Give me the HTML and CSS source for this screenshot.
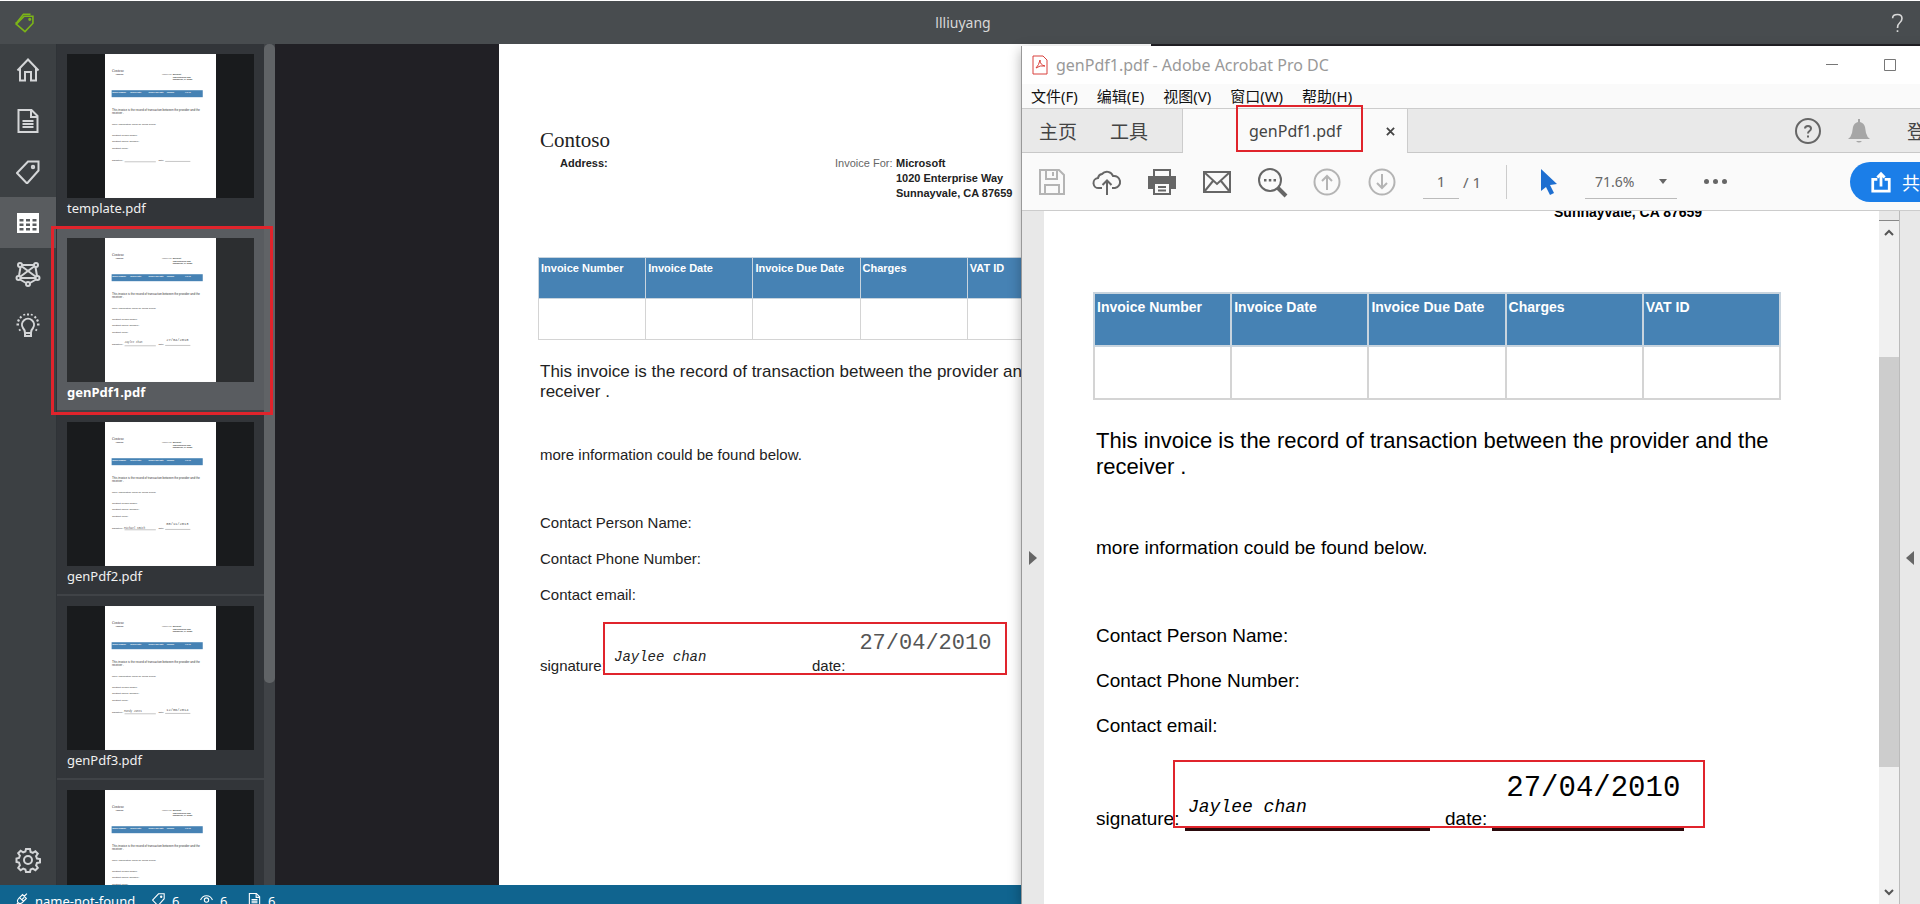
FILE: index.html
```html
<!DOCTYPE html>
<html lang="en">
<head>
    <meta charset="UTF-8">
    <meta name="viewport" content="width=device-width, initial-scale=1.0">
    <title>llliuyang</title>
    <link rel="stylesheet" href="styles.css">
</head>
<body>
    <!-- shared drawings -->
    <svg class="defs" aria-hidden="true">
        <symbol id="i-tag" viewBox="0 0 24 24"><path d="M1 13 12 1.500h10.500v9L11 23.500z"/><circle cx="17" cy="7" r="1.200"/></symbol>
        <symbol id="i-doc" viewBox="0 0 24 24"><path d="M2.500 1h13l6 6v16h-19z"/><path d="M15 1v7h6.500M6.500 12h11M6.500 15h11M6.500 18h11"/></symbol>
        <symbol id="thumb" viewBox="0 0 653 847">
            <rect width="653" height="847" fill="#fff"/>
            <g font-family="Liberation Sans, Arial, sans-serif" font-size="15" fill="#333">
                <text x="41" y="103" font-family="Liberation Serif, serif" font-size="21">Contoso</text>
                <g font-size="11" font-weight="bold">
                    <text x="62" y="124">Address:</text>
                    <text x="336" y="124" font-weight="normal">Invoice For:</text>
                    <text x="398" y="124">Microsoft</text>
                    <text x="398" y="139">1020 Enterprise Way</text>
                    <text x="398" y="154">Sunnayvale, CA 87659</text>
                </g>
                <rect x="39" y="213" width="536" height="41" fill="#4682b4"/>
                <g font-size="11" font-weight="bold" fill="#fff">
                    <text x="42" y="227">Invoice Number</text>
                    <text x="149" y="227">Invoice Date</text>
                    <text x="256" y="227">Invoice Due Date</text>
                    <text x="363" y="227">Charges</text>
                    <text x="471" y="227">VAT ID</text>
                </g>
                <text x="41" y="333" font-size="17">This invoice is the record of transaction between the provider and the</text>
                <text x="41" y="353" font-size="17">receiver .</text>
                <text x="41" y="416">more information could be found below.</text>
                <text x="41" y="484">Contact Person Name:</text>
                <text x="41" y="520">Contact Phone Number:</text>
                <text x="41" y="556">Contact email:</text>
                <text x="41" y="627">signature:</text>
                <text x="314" y="627">date:</text>
                <path d="M115 634h184M354 632h148" stroke="#555" stroke-width="2"/>
            </g>
        </symbol>
    </svg>

    <div class="app">
        <header class="titlebar">
            <svg class="logo" viewBox="0 0 24 24"><path d="M1 14 11 4h11v9L12 23.500z"/><path d="M1 13 10 1.500h9"/><path d="M1 11.500v2.500"/><circle cx="18" cy="8" r="1"/></svg>
            <h1>llliuyang</h1>
            <button class="help" aria-label="Help">
                <svg viewBox="0 0 16 24"><path d="M2 6q0-4.500 6-4.500 5.500 0 5.500 5 0 3-3 5.500-2.500 2-2.500 6M8 21v2"/></svg>
            </button>
        </header>

        <div class="workspace">
            <nav class="sidebar">
                <button aria-label="Home"><svg viewBox="0 0 24 24"><path d="M1.500 12.500 12 1.500l10.500 11M4 10.500V22.500h5v-8.500h6v8.500h5V10.500"/></svg></button>
                <button aria-label="Documents"><svg><use href="#i-doc"/></svg></button>
                <button aria-label="Tags"><svg><use href="#i-tag"/></svg></button>
                <button class="active" aria-label="Tables"><svg viewBox="0 0 24 24"><path class="solid" d="M1 2h22v20H1zM3.500 8h4v2.500h-4zM10 8h4v2.500h-4zM16.500 8h4v2.500h-4zM3.500 12.500h4V15h-4zM10 12.500h4V15h-4zM16.500 12.500h4V15h-4zM3.500 17h4v2.500h-4zM10 17h4v2.500h-4zM16.500 17h4v2.500h-4z"/></svg></button>
                <button aria-label="Train"><svg viewBox="0 0 24 24"><path d="M6 3h12M4.500 5 3 14M19.500 5 21 14M6 4.500l13.500 10M18 4.500 4.500 14.500M4 17.500l6 3.500M20 17.500l-6 3.500M4.500 16h15"/><circle cx="4" cy="3" r="2"/><circle cx="20" cy="3" r="2"/><circle cx="2.500" cy="16" r="2"/><circle cx="21.500" cy="16" r="2"/><circle cx="12" cy="22" r="2"/></svg></button>
                <button aria-label="Predict"><svg viewBox="0 0 24 24"><path d="M9 20q0-3-2-5a6 6 0 1 1 10 0q-2 2-2 5v3H9zM9 20h6M12 .5v2M4 3.500l1.500 1.500M20 3.500 18.500 5M.5 11.500h2.500M21 11.500h2.500M8 1l.5 1.500M16 1l-.5 1.500M1.500 7l2 1M22.500 7l-2 1M3 17.500l1.500-1M21 17.500l-1.500-1"/></svg></button>
                <button class="settings" aria-label="Settings"><svg viewBox="0 0 24 24"><path d="M10 1h4l.6 3 2.200.9 2.600-1.700 2.400 2.500-1.700 2.500.9 2.300 3 .5v3.500l-3 .5-.9 2.300 1.700 2.500-2.400 2.500-2.600-1.700-2.200.9-.6 2.500h-4l-.6-2.500-2.200-.9-2.600 1.700-2.400-2.500 1.700-2.500L3 14.500l-2.500-.5v-3.500l2.500-.5.900-2.300-1.700-2.500 2.400-2.500 2.600 1.700 2.200-.9z"/><circle cx="12" cy="12" r="4"/></svg></button>
            </nav>

            <div class="previews">
                <ul class="preview-list">
                    <li class="preview">
                        <div class="thumb"><svg><use href="#thumb"/></svg></div>
                        <span>template.pdf</span>
                    </li>
                    <li class="preview selected">
                        <div class="thumb"><svg viewBox="0 0 653 847"><use href="#thumb"/><text class="mini-sign" x="115" y="618">Jaylee chan</text><text class="mini-date" x="360" y="606">27/04/2010</text></svg></div>
                        <span>genPdf1.pdf</span>
                    </li>
                    <li class="preview">
                        <div class="thumb"><svg viewBox="0 0 653 847"><use href="#thumb"/><text class="mini-sign" x="112" y="632">Michael Smith</text><text class="mini-date" x="360" y="606">08/11/2013</text></svg></div>
                        <span>genPdf2.pdf</span>
                    </li>
                    <li class="preview">
                        <div class="thumb"><svg viewBox="0 0 653 847"><use href="#thumb"/><text class="mini-sign" x="112" y="626">Mandy Jones</text><text class="mini-date" x="360" y="616">12/06/2014</text></svg></div>
                        <span>genPdf3.pdf</span>
                    </li>
                    <li class="preview">
                        <div class="thumb"><svg><use href="#thumb"/></svg></div>
                    </li>
                </ul>
                <div class="list-scroll"><i></i></div>
                <div class="mark mark-preview"></div>
            </div>

            <main class="editor">
                <article class="page page-small">
                    <div class="company">Contoso</div>
                    <div class="address">
                        <b class="from">Address:</b>
                        <span>Invoice For:</span>
                        <b>Microsoft<br>1020 Enterprise Way<br>Sunnayvale, CA 87659</b>
                    </div>
                    <table>
                        <tr><th>Invoice Number</th><th>Invoice Date</th><th>Invoice Due Date</th><th>Charges</th><th>VAT ID</th></tr>
                        <tr><td></td><td></td><td></td><td></td><td></td></tr>
                    </table>
                    <p class="lead">This invoice is the record of transaction between the provider and the<br>receiver .</p>
                    <p class="more">more information could be found below.</p>
                    <p class="contact">Contact Person Name:</p>
                    <p class="contact">Contact Phone Number:</p>
                    <p class="contact">Contact email:</p>
                    <div class="sign">
                        <span class="sign-label">signature:</span>
                        <span class="blank blank-name">Jaylee chan</span>
                        <span>date:</span>
                        <span class="blank blank-date">27/04/2010</span>
                        <div class="mark mark-sign"></div>
                    </div>
                </article>
            </main>
        </div>

        <footer class="statusbar">
            <svg viewBox="0 0 24 24"><path d="M1 23l5-5M6 11l8-8 7 7-8 8q-4 3-7 0t0-7M17 6l5-5M9 9l7 7M13 12l4-4"/></svg>
            <span class="conn">name-not-found</span>
            <svg><use href="#i-tag"/></svg><span>6</span>
            <svg viewBox="0 0 24 24"><path d="M1 13Q4 5 12 5t11 8"/><circle cx="12" cy="13" r="4"/></svg><span>6</span>
            <svg><use href="#i-doc"/></svg><span>6</span>
        </footer>
    </div>

    <!-- reader window on top of the app -->
    <section class="window" lang="zh-CN">
        <div class="win-title">
            <svg class="pdf" viewBox="0 0 16 20"><path d="M1 1h10l4 4v14H1z"/><path d="M4 13q3-3 4-8 0 5 5 6-5-1-9 2z"/></svg>
            <span>genPdf1.pdf - Adobe Acrobat Pro DC</span>
            <div class="win-buttons">
                <button aria-label="Minimize"><svg viewBox="0 0 12 12"><path d="M0 5.500h12"/></svg></button>
                <button aria-label="Maximize"><svg viewBox="0 0 12 12"><path d="M.5.500h11v11H.5z"/></svg></button>
            </div>
        </div>
        <div class="win-menu">
            <span>文件(F)</span><span>编辑(E)</span><span>视图(V)</span><span>窗口(W)</span><span>帮助(H)</span>
        </div>
        <div class="win-tabs">
            <div class="tabs-left"><span>主页</span><span>工具</span></div>
            <div class="tab-open">
                <span>genPdf1.pdf</span>
                <button aria-label="Close tab"><svg viewBox="0 0 10 10"><path d="M1 1l8 8M9 1 1 9"/></svg></button>
                <div class="mark mark-tab"></div>
            </div>
            <div class="tabs-right">
                <button aria-label="Help"><svg viewBox="0 0 28 28"><circle cx="14" cy="14" r="12"/><path d="M11 11.500q0-2.500 3-2.500t3 2.500q0 1.500-1.500 2.500t-1.500 2.500M14 18.500v2"/></svg></button>
                <button class="bell" aria-label="Notifications"><svg viewBox="0 0 22 26"><path d="M0 21q3-2 4-6l1-6q1-4 5-5V1h2v3q4 1 5 5l1 6q1 4 4 6zM8 23h6q-3 3-6 0z"/></svg></button>
                <span>登录</span>
            </div>
        </div>
        <div class="win-tools">
            <button class="dim" aria-label="Save"><svg viewBox="0 0 28 28"><path d="M2 2h19l5 5v19H2zM8 2v9h11V2M7 26V17h14v9M15 4v4"/></svg></button>
            <button aria-label="Upload"><svg viewBox="0 0 28 28"><path d="M9 20H6a5 5 0 0 1-1-10 5 5 0 0 1 4-4 6.500 6.500 0 0 1 11 2 6 6 0 0 1 2 12h-3M14 27V13M9.500 17 14 12.500l4.500 4.500"/></svg></button>
            <button aria-label="Print"><svg viewBox="0 0 28 28"><path d="M6 8V2h16v6"/><path class="fill" d="M0 8h28v13h-5v-6H5v6H0z"/><path d="M6 15h16v11H6zM10 19h8M10 22.500h8"/></svg></button>
            <button aria-label="Mail"><svg viewBox="0 0 28 28"><path d="M1 4h26v20H1zM1 4l13 12L27 4M1 24l9-11M27 24l-9-11"/></svg></button>
            <button aria-label="Find"><svg viewBox="0 0 28 28"><circle cx="12" cy="12" r="11"/><path class="thick" d="M19.500 19.500 28 28"/><path class="fill" d="M6 11h2.500v2.500H6zM10.800 11h2.500v2.500h-2.500zM15.500 11H18v2.500h-2.500z"/></svg></button>
            <button class="dim" aria-label="Previous page"><svg viewBox="0 0 28 28"><circle cx="14" cy="14" r="12.500"/><path d="M14 22V8M9 13l5-5 5 5"/></svg></button>
            <button class="dim" aria-label="Next page"><svg viewBox="0 0 28 28"><circle cx="14" cy="14" r="12.500"/><path d="M14 6v14M9 15l5 5 5-5"/></svg></button>
            <label class="page-no"><input type="text" value="1" aria-label="Page"> / 1</label>
            <button class="pointer" aria-label="Select"><svg viewBox="0 0 18 28"><path d="M1 1v22l5-4 4 8 4-2-4-8 7-1z"/></svg></button>
            <button class="zoom">71.6%<svg viewBox="0 0 8 5"><path class="fill" d="M0 0h8L4 5z"/></svg></button>
            <button class="dots" aria-label="More tools"><i></i><i></i><i></i></button>
            <button class="share"><svg viewBox="0 0 24 24"><path d="M8 9H3v13h18V9h-5M12 17V3M8 7l4-4 4 4"/></svg>共享</button>
        </div>
        <div class="win-body">
            <button class="pane" aria-label="Open left pane"><svg viewBox="0 0 8 14"><path d="M0 0l8 7-8 7z"/></svg></button>
            <div class="canvas">
                <article class="page page-large">
                    <div class="address"><b>Sunnayvale, CA 87659</b></div>
                    <table>
                        <tr><th>Invoice Number</th><th>Invoice Date</th><th>Invoice Due Date</th><th>Charges</th><th>VAT ID</th></tr>
                        <tr><td></td><td></td><td></td><td></td><td></td></tr>
                    </table>
                    <p class="lead">This invoice is the record of transaction between the provider and the<br>receiver .</p>
                    <p class="more">more information could be found below.</p>
                    <p class="contact">Contact Person Name:</p>
                    <p class="contact">Contact Phone Number:</p>
                    <p class="contact">Contact email:</p>
                    <div class="sign">
                        <span class="sign-label">signature:</span>
                        <div class="mark mark-sign"></div>
                        <span class="blank blank-name">Jaylee chan</span>
                        <span>date:</span>
                        <span class="blank blank-date">27/04/2010</span>
                    </div>
                </article>
            </div>
            <div class="win-scroll">
                <div class="split"></div>
                <svg viewBox="0 0 10 7"><path d="M1 6l4-4 4 4"/></svg>
                <div class="track"><i></i></div>
                <svg viewBox="0 0 10 7"><path d="M1 1l4 4 4-4"/></svg>
            </div>
            <button class="pane pane-right" aria-label="Open right pane"><svg viewBox="0 0 8 14"><path d="M8 0 0 7l8 7z"/></svg></button>
        </div>
    </section>
</body>
</html>
```

FILE: styles.css
```css
* {
    box-sizing: border-box;
}
body {
    margin: 0;
    height: 100vh;
    overflow: hidden;
    position: relative;
    font-family: "Noto Sans", "Noto Sans CJK SC", sans-serif;
    font-size: 14px;
    background-color: #212025;
}
button {
    display: flex;
    align-items: center;
    justify-content: center;
    padding: 0;
    border: none;
    background: none;
    color: inherit;
    font: inherit;
    cursor: pointer;
}
svg {
    display: block;
    flex: none;
    fill: none;
    stroke: currentColor;
    overflow: visible;
}
.defs {
    position: absolute;
    width: 0;
    height: 0;
}
.mark {
    position: absolute;
    border: 2px solid #e0242c;
    pointer-events: none;
}

/* main app */
.app {
    display: flex;
    flex-direction: column;
    height: 100%;
}
.titlebar {
    display: flex;
    align-items: center;
    flex: none;
    height: 44px;
    padding: 0 16px 0 15px;
    border-top: 1px solid #fff;
    background-color: #484c4f;
    color: #d8d8d8;
}
.logo {
    width: 20px;
    height: 19px;
    color: #7cb518;
    stroke-width: 2;
}
.titlebar h1 {
    flex: 1;
    margin: 0;
    text-align: center;
    font-size: 14px;
    font-weight: normal;
}
.help svg {
    width: 13px;
    height: 20px;
    stroke-width: 2;
}
.workspace {
    display: flex;
    flex: 1;
    min-height: 0;
}
.sidebar {
    display: flex;
    flex-direction: column;
    flex: none;
    width: 56px;
    background-color: #3c4043;
    color: #d4d6d8;
}
.sidebar button {
    height: 51px;
    width: 56px;
}
.sidebar svg {
    width: 24px;
    height: 24px;
    stroke-width: 2;
}
.sidebar .active {
    background-color: #595c5f;
    color: #fff;
}
.solid {
    fill: currentColor;
    fill-rule: evenodd;
    stroke: none;
}
.sidebar .settings {
    margin-top: auto;
}
.previews {
    position: relative;
    display: flex;
    flex: none;
    width: 219px;
    border-left: 1px solid #2f3337;
    background-color: #323539;
}
.preview-list {
    flex: 1;
    margin: 0;
    padding: 0;
    overflow: hidden;
    list-style: none;
}
.preview {
    height: 184px;
    padding: 10px;
    border-bottom: 2px solid #404347;
    color: #f0f0f0;
    font-size: 13px;
}
.preview.selected {
    background-color: #595c60;
    color: #fff;
}
.selected span {
    font-weight: bold;
}
.thumb {
    height: 144px;
    background-color: #191b1d;
}
.selected .thumb {
    background-color: #2c2e30;
}
.thumb svg {
    width: 111px;
    height: 144px;
    margin: 0 auto;
    stroke: none;
}
.mini-sign {
    fill: #555;
    font: italic 16px "Liberation Mono", monospace;
}
.mini-date {
    fill: #555;
    font: 22px "Liberation Mono", monospace;
}
.preview span {
    display: block;
    line-height: 20px;
}
.list-scroll {
    flex: none;
    width: 11px;
    background-color: #404347;
}
.list-scroll i {
    display: block;
    height: 76%;
    border-radius: 5px;
    background-color: #606366;
}
.mark-preview {
    top: 182px;
    left: -6px;
    right: 2px;
    height: 189px;
    border-width: 3px;
}
.editor {
    flex: 1;
    min-width: 0;
    padding-left: 224px;
    overflow: hidden;
    background-color: #212025;
}
.statusbar {
    display: flex;
    flex: none;
    height: 19px;
    padding-left: 15px;
    background-color: #10648f;
    color: #fff;
    font-size: 13px;
    line-height: 32px;
}
.statusbar svg {
    width: 13px;
    height: 13px;
    margin-top: 8px;
    stroke-width: 2;
}
.statusbar span {
    width: 35px;
    padding-left: 7px;
}
.statusbar .conn {
    width: 124px;
}

/* invoice */
.page {
    background-color: #fff;
    color: #222;
    font-family: "Liberation Sans", Arial, sans-serif;
}
.page p {
    margin: 0;
    white-space: nowrap;
}
.company {
    font-family: "Liberation Serif", serif;
}
.page table {
    table-layout: fixed;
    border-collapse: collapse;
}
.page th {
    border: 1px solid #c8d4de;
    background-color: #4682b4;
    color: #fff;
    text-align: left;
    vertical-align: top;
    white-space: nowrap;
}
.page td {
    border: 1px solid #d4d4d4;
}
.sign {
    position: relative;
    display: flex;
}
.blank {
    position: relative;
    font-family: "Liberation Mono", monospace;
}
.blank-name {
    font-style: italic;
}

.page-small {
    width: 652px;
    height: 100%;
    padding: 84px 0 0 41px;
    font-size: 15px;
    line-height: 20px;
}
.page-small .company {
    font-size: 21px;
    line-height: 24px;
}
.page-small .address {
    display: flex;
    margin: 4px 0 56px 20px;
    font-size: 11px;
    line-height: 15px;
}
.page-small .from {
    width: 275px;
}
.page-small .address span {
    width: 61px;
    color: #666;
}
.page-small table {
    width: 537px;
    margin-left: -2px;
    font-size: 11px;
    line-height: 12px;
}
.page-small tr {
    height: 41px;
}
.page-small th {
    padding: 4px 2px;
}
.page-small .lead {
    margin: 22px 0 43px;
    font-size: 17px;
}
.page-small .more {
    margin-bottom: 48px;
}
.page-small .contact {
    margin-bottom: 16px;
}
.page-small .sign {
    margin-top: 51px;
}
.page-small .sign-label {
    width: 74px;
}
.page-small .blank {
    bottom: 9px;
    font-size: 14px;
}
.page-small .blank-name {
    width: 198px;
}
.page-small .blank-date {
    bottom: 22px;
    margin-left: 14px;
    color: #555;
    font-size: 22px;
}
.page-small .mark-sign {
    left: 63px;
    top: -34px;
    width: 404px;
    height: 53px;
}

.page-large {
    height: 100%;
    padding: 0 0 0 52px;
    color: #000;
    font-size: 19px;
    line-height: 26px;
}
.page-large .address {
    margin: -9px 0 70px 458px;
    font-size: 14px;
    line-height: 20px;
}
.page-large table {
    width: 688px;
    margin-left: -3px;
    font-size: 14px;
    line-height: 16px;
}
.page-large tr {
    height: 53px;
}
.page-large th,
.page-large td {
    border-width: 2px;
}
.page-large th {
    padding: 5px 2px;
}
.page-large .lead {
    margin: 28px 0 55px;
    font-size: 22px;
}
.page-large .more {
    margin-bottom: 62px;
}
.page-large .contact {
    margin-bottom: 19px;
}
.page-large .sign {
    margin-top: 67px;
}
.page-large .sign-label {
    width: 89px;
}
.page-large .blank {
    height: 25px;
    border-bottom: 3px solid #2a0a0c;
    line-height: 2px;
    font-size: 18px;
}
.page-large .blank-name {
    width: 245px;
    margin-right: 15px;
    padding-left: 3px;
}
/* the date field is taller than its row */
.page-large .blank-date {
    width: 192px;
    height: 60px;
    margin: -35px 0 0 5px;
    padding-left: 14px;
    line-height: 36px;
    font-size: 29px;
}
.page-large .mark-sign {
    left: 77px;
    top: -46px;
    width: 532px;
    height: 68px;
}

/* reader window, its right edge runs off the screen */
.window {
    position: absolute;
    top: 46px;
    right: -60px;
    bottom: 0;
    left: 1021px;
    display: flex;
    flex-direction: column;
    border-left: 1px solid #999;
    background-color: #fafafa;
    box-shadow: 0 4px 12px rgba(0, 0, 0, 0.3);
    color: #666;
}
.win-title {
    display: flex;
    align-items: center;
    flex: none;
    height: 38px;
    padding-left: 10px;
    background-color: #fff;
    color: #999;
    font-size: 16px;
}
.pdf {
    width: 16px;
    height: 20px;
    margin-right: 8px;
    color: #d9413c;
}
.win-buttons {
    display: flex;
    gap: 46px;
    margin-left: auto;
    padding-right: 84px;
    color: #777;
}
.win-buttons svg {
    width: 12px;
    height: 12px;
}
.win-menu {
    display: flex;
    flex: none;
    gap: 19px;
    height: 24px;
    padding-left: 9px;
    color: #111;
    font-size: 15px;
    line-height: 24px;
}
.win-tabs {
    display: flex;
    flex: none;
    height: 45px;
    border-top: 1px solid #ccc;
    background-color: #e9e9e9;
    color: #444;
}
.tabs-left,
.tabs-right {
    display: flex;
    align-items: center;
    border-bottom: 1px solid #c8c8c8;
    font-size: 19px;
}
.tabs-left {
    gap: 33px;
    width: 161px;
    padding-left: 17px;
    border-right: 1px solid #ccc;
}
.tab-open {
    position: relative;
    display: flex;
    align-items: center;
    width: 224px;
    padding-left: 66px;
    background-color: #fafafa;
    font-size: 16px;
}
.tab-open button {
    margin-left: auto;
    margin-right: 12px;
}
.tab-open svg {
    width: 9px;
    height: 9px;
    stroke-width: 2;
}
.mark-tab {
    top: -4px;
    left: 53px;
    width: 127px;
    height: 47px;
}
.tabs-right {
    flex: 1;
    gap: 26px;
    padding-left: 386px;
    border-left: 1px solid #ccc;
    white-space: nowrap;
}
.tabs-right svg {
    width: 28px;
    height: 28px;
    color: #666;
    stroke-width: 2;
}
.bell svg {
    width: 22px;
    height: 26px;
    fill: #a6a6a6;
    stroke: none;
}
.tabs-right span {
    margin-left: 11px;
}
.win-tools {
    display: flex;
    align-items: center;
    flex: none;
    gap: 27px;
    height: 58px;
    padding-left: 16px;
    border-bottom: 1px solid #ccc;
}
.win-tools svg {
    width: 28px;
    height: 28px;
    stroke-width: 2;
}
.win-tools .dim {
    color: #b4b4b4;
}
.win-tools .fill {
    fill: currentColor;
    stroke: none;
}
.win-tools .thick {
    stroke-width: 4;
}
.page-no {
    height: 34px;
    width: 84px;
    line-height: 30px;
    white-space: nowrap;
    font-size: 15px;
    border-right: 1px solid #ccc;
}
.page-no input {
    width: 36px;
    height: 34px;
    padding: 0;
    border: none;
    border-bottom: 1px solid #bbb;
    background: none;
    color: inherit;
    font: inherit;
    text-align: center;
}
.win-tools .pointer {
    margin-left: 6px;
}
.win-tools .pointer svg {
    width: 18px;
    fill: #1f6fd0;
    stroke: none;
}
.zoom {
    justify-content: space-between;
    width: 92px;
    height: 34px;
    padding: 0 10px;
    border-bottom: 1px solid #bbb;
    font-size: 14px;
}
.win-tools .zoom svg {
    width: 8px;
    height: 5px;
}
.dots {
    gap: 4px;
}
.dots i {
    width: 5px;
    height: 5px;
    border-radius: 50%;
    background-color: #666;
}
.share {
    justify-content: flex-start;
    gap: 10px;
    width: 130px;
    height: 40px;
    margin-left: auto;
    padding-left: 20px;
    border-radius: 20px;
    background-color: #1b7ee8;
    color: #fff;
    font-size: 18px;
}
.win-tools .share svg {
    width: 22px;
    height: 22px;
    stroke-width: 3;
}
.win-body {
    display: flex;
    flex: 1;
    min-height: 0;
}
.pane {
    flex: none;
    width: 22px;
    background-color: #e8e8e8;
}
.pane svg {
    width: 8px;
    height: 14px;
    fill: #666;
    stroke: none;
}
.pane-right {
    justify-content: flex-start;
    width: 81px;
    padding-left: 6px;
    border-left: 1px solid #bbb;
}
.canvas {
    flex: 1;
    min-width: 0;
    overflow: hidden;
    background-color: #fff;
}
.win-scroll {
    display: flex;
    flex-direction: column;
    align-items: center;
    flex: none;
    width: 20px;
    background-color: #f0f0f0;
}
.win-scroll svg {
    width: 10px;
    height: 7px;
    margin: 8px 0;
    stroke: #555;
    stroke-width: 2;
}
.split {
    width: 100%;
    height: 10px;
    border-bottom: 1px solid #888;
    background-color: #e8e8e8;
}
.track {
    flex: 1;
    width: 100%;
    padding-top: 113px;
}
.track i {
    display: block;
    height: 410px;
    background-color: #cdcdcd;
}
```
